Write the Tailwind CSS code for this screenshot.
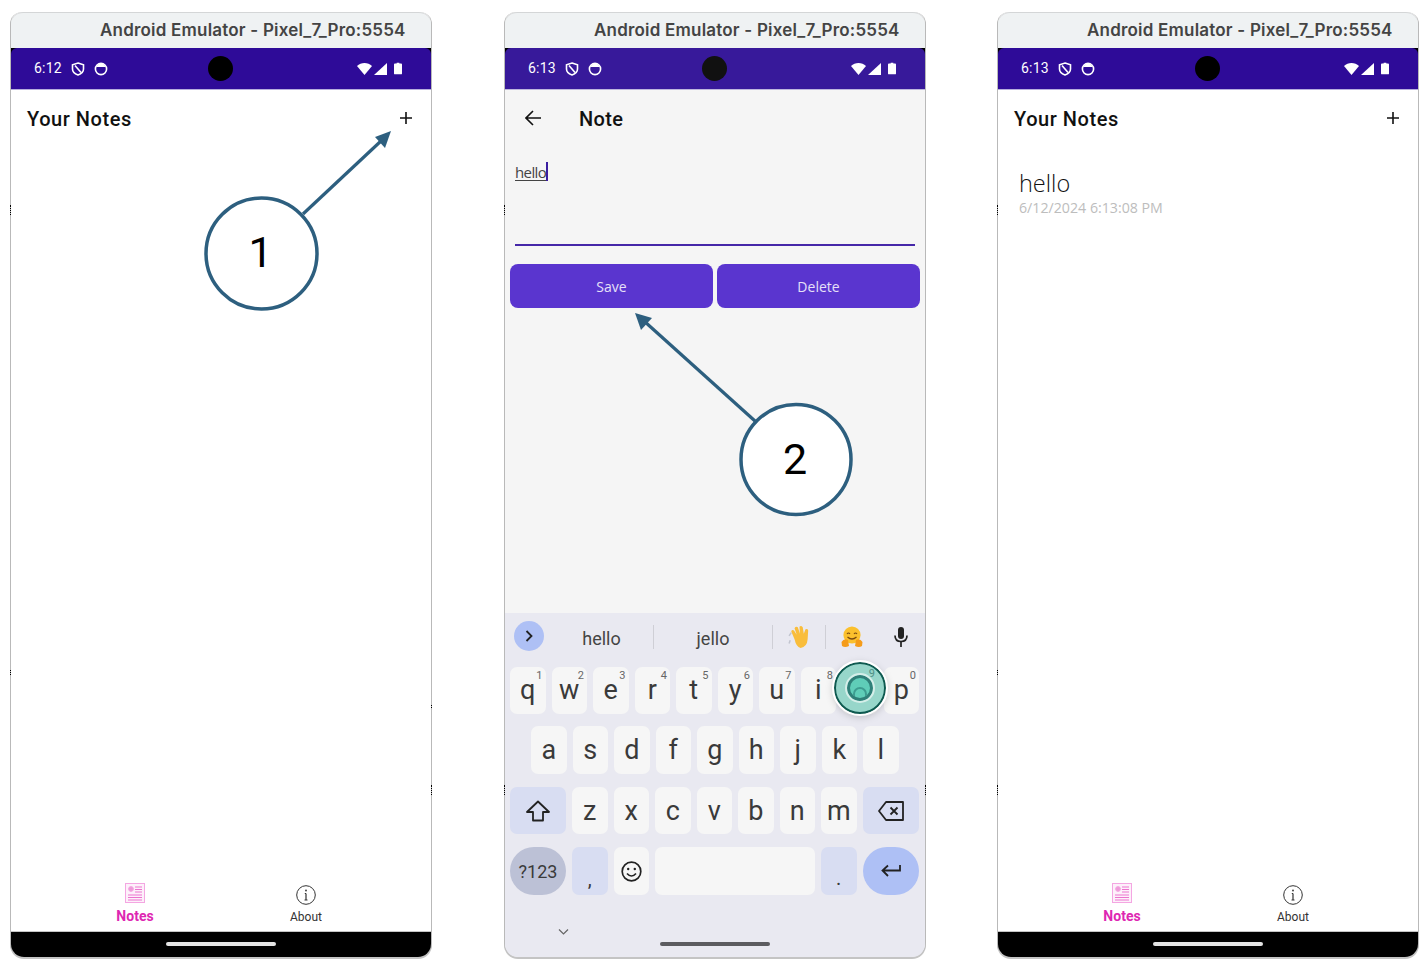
<!DOCTYPE html>
<html lang="en">
<head>
<meta charset="UTF-8">
<meta name="viewport" content="width=device-width, initial-scale=1.0">
<script src="https://cdn.jsdelivr.net/npm/@tailwindcss/browser@4"></script>
<title>Notes app walkthrough</title>
</head>
<body class="bg-white">
<main class="relative w-[1426px] h-[966px] overflow-hidden flex items-start pl-[10px] pt-[12px] font-['Roboto',sans-serif]">

  <!-- phone 1 -->
  <section class="relative w-[422px] h-[945px] flex flex-col rounded-t-[12px] rounded-b-[14px] border-x border-[#b9b9b9] bg-white shadow-[0_2px_0_#c4c4c4]">
    <span class="absolute left-[-1px] top-[193px] h-[10px] border-l border-dotted border-black"></span>
    <span class="absolute left-[-1px] top-[658px] h-[5px] border-l border-dotted border-black"></span>
    <span class="absolute right-[-1px] top-[693px] h-[3px] border-l border-dotted border-black"></span>
    <span class="absolute right-[-1px] top-[773px] h-[10px] border-l border-dotted border-black"></span>
    <header class="h-[36px] pl-[89px] flex items-center rounded-t-[12px] bg-[#eff2f3] border-t border-[#d4d6d7] text-[17px] tracking-[0.2px] font-semibold text-[#444] font-['Inter',sans-serif] whitespace-nowrap">Android Emulator - Pixel_7_Pro:5554</header>
    <div class="bg-black">
      <div class="h-[42px] pl-[23px] pr-[23px] grid grid-cols-3 items-center rounded-t-[6px] bg-[#2e0b98] border-b border-[#b6aedd] text-white">
        <div class="flex items-center gap-[8px]">
          <span class="text-[14px] tracking-[0.2px] w-[29px]">6:12</span>
          <svg class="w-[14px] h-[14px]" viewBox="0 0 14 14" fill="none" stroke="#fff" stroke-width="1.6"><path d="M7 1 L12.500 2.800 V7 C12.500 10 10 12 7 13 C4 12 1.500 10 1.500 7 V2.800 Z"/><path d="M4 3.500 L10 10.500"/></svg>
          <svg class="ml-[1px] w-[14px] h-[14px]" viewBox="0 0 14 14"><circle cx="7" cy="7" r="5.600" fill="none" stroke="#fff" stroke-width="1.6"/><path d="M2.500 5 H11.500 V4 L9 2 H5 L2.500 4 Z" fill="#fff"/></svg>
        </div>
        <div class="justify-self-center w-[25px] h-[25px] rounded-full bg-black"></div>
        <div class="justify-self-end mr-[6px] flex items-center gap-[2px]">
          <svg class="w-[15px] h-[12px]" viewBox="0 0 15 12"><path d="M0 3 C4 -1 11 -1 15 3 L7.500 12 Z" fill="#fff"/></svg>
          <svg class="w-[13px] h-[12px]" viewBox="0 0 13 12"><path d="M13 0 V12 H0 Z" fill="#fff"/></svg>
          <svg class="ml-[5px] w-[8px] h-[13px]" viewBox="0 0 9 13"><path d="M3 0 H6 V1 H8 Q9 1 9 2 V12 Q9 13 8 13 H1 Q0 13 0 12 V2 Q0 1 1 1 H3 Z" fill="#fff"/></svg>
        </div>
      </div>
    </div>
    <div class="h-[58px] pl-[16px] pr-[19px] flex items-center justify-between">
      <h1 class="text-[20px] font-medium tracking-[0.55px] text-[#111]">Your Notes</h1>
      <svg class="w-[12px] h-[12px] mb-[2px]" viewBox="0 0 12 12" stroke="#111" stroke-width="1.6"><path d="M6 0 V12 M0 6 H12"/></svg>
    </div>
    <div class="flex-1"></div>
    <nav class="h-[53px] pt-[4px] flex items-start border-b border-[#c4c4c4]">
      <div class="ml-[94px] w-[60px] flex flex-col items-center">
        <svg class="w-[20px] h-[20px]" viewBox="0 0 20 20" fill="none" stroke="#f4a6e2"><rect x="0.500" y="0.500" width="19" height="19" fill="#fdf0fa"/><circle cx="6" cy="6" r="2.400" fill="#ee9ad9"/><path d="M10 4 H17 M10 6.500 H17 M10 9 H17 M3 12 H17 M3 14.500 H17 M3 17 H17" stroke="#ec74cf"/></svg>
        <span class="mt-[4px] text-[14px] leading-[18px] font-bold text-[#de27b2]">Notes</span>
      </div>
      <div class="ml-[111px] w-[60px] flex flex-col items-center pt-[2px]">
        <svg class="w-[20px] h-[20px]" viewBox="0 0 20 20" fill="none" stroke="#333"><circle cx="10" cy="10" r="9.300"/><path d="M10 8.500 V15 M8.500 15 H11.500 M8.800 8.500 H10" stroke-width="1.2"/><circle cx="10" cy="5.500" r="0.900" fill="#333" stroke="none"/></svg>
        <span class="mt-[4px] text-[12px] leading-[16px] text-[#333]">About</span>
      </div>
    </nav>
    <div class="h-[25px] flex justify-center items-end pb-[11px] rounded-b-[13px] bg-black">
      <div class="w-[110px] h-[4px] rounded-full bg-[#e4e4e4]"></div>
    </div>
  </section>

  <!-- phone 2 -->
  <section class="relative ml-[72px] w-[422px] h-[945px] flex flex-col rounded-t-[12px] rounded-b-[14px] border-x border-[#b9b9b9] bg-[#f5f5f5] shadow-[0_2px_0_#c4c4c4]">
    <span class="absolute left-[-1px] top-[193px] h-[10px] border-l border-dotted border-black"></span>
    <span class="absolute left-[-1px] top-[773px] h-[10px] border-l border-dotted border-black"></span>
    <span class="absolute right-[-1px] top-[773px] h-[10px] border-l border-dotted border-black"></span>
    <header class="h-[36px] pl-[89px] flex items-center rounded-t-[12px] bg-[#eff2f3] border-t border-[#d4d6d7] text-[17px] tracking-[0.2px] font-semibold text-[#444] font-['Inter',sans-serif] whitespace-nowrap">Android Emulator - Pixel_7_Pro:5554</header>
    <div class="bg-black">
      <div class="h-[42px] pl-[23px] pr-[23px] grid grid-cols-3 items-center rounded-t-[6px] bg-[#37199a] border-b border-[#bdb6dd] text-white">
        <div class="flex items-center gap-[8px]">
          <span class="text-[14px] tracking-[0.2px] w-[29px]">6:13</span>
          <svg class="w-[14px] h-[14px]" viewBox="0 0 14 14" fill="none" stroke="#fff" stroke-width="1.6"><path d="M7 1 L12.500 2.800 V7 C12.500 10 10 12 7 13 C4 12 1.500 10 1.500 7 V2.800 Z"/><path d="M4 3.500 L10 10.500"/></svg>
          <svg class="ml-[1px] w-[14px] h-[14px]" viewBox="0 0 14 14"><circle cx="7" cy="7" r="5.600" fill="none" stroke="#fff" stroke-width="1.6"/><path d="M2.500 5 H11.500 V4 L9 2 H5 L2.500 4 Z" fill="#fff"/></svg>
        </div>
        <div class="justify-self-center w-[25px] h-[25px] rounded-full bg-[#111]"></div>
        <div class="justify-self-end mr-[6px] flex items-center gap-[2px]">
          <svg class="w-[15px] h-[12px]" viewBox="0 0 15 12"><path d="M0 3 C4 -1 11 -1 15 3 L7.500 12 Z" fill="#fff"/></svg>
          <svg class="w-[13px] h-[12px]" viewBox="0 0 13 12"><path d="M13 0 V12 H0 Z" fill="#fff"/></svg>
          <svg class="ml-[5px] w-[8px] h-[13px]" viewBox="0 0 9 13"><path d="M3 0 H6 V1 H8 Q9 1 9 2 V12 Q9 13 8 13 H1 Q0 13 0 12 V2 Q0 1 1 1 H3 Z" fill="#fff"/></svg>
        </div>
      </div>
    </div>
    <div class="h-[58px] pl-[20px] flex items-center">
      <svg class="w-[16px] h-[16px] mb-[2px]" viewBox="0 0 16 16" fill="none" stroke="#111" stroke-width="1.6"><path d="M16 8 H1 M8 1 L1 8 L8 15"/></svg>
      <h1 class="ml-[38px] text-[20px] font-medium tracking-[0.35px] text-[#111]">Note</h1>
    </div>
    <div class="mx-[10px] h-[98px] border-b-2 border-[#4527a8]">
      <div class="pt-[14px] flex items-start">
        <span class="text-[15px] leading-[20px] text-[#444] underline underline-offset-2 font-['Open_Sans',sans-serif] tracking-[-0.6px]">hello</span>
        <span class="w-[2px] h-[19px] bg-[#3b1ea0]"></span>
      </div>
    </div>
    <div class="mt-[18px] px-[5px] flex gap-[4px]">
      <button class="w-[203px] h-[44px] rounded-[8px] bg-[#5a35cf] text-[14px] text-[#e6e0f8] font-['Open_Sans',sans-serif]">Save</button>
      <button class="w-[203px] h-[44px] rounded-[8px] bg-[#5a35cf] text-[14px] text-[#e6e0f8] font-['Open_Sans',sans-serif]">Delete</button>
    </div>
    <div class="flex-1"></div>

    <!-- keyboard -->
    <div class="relative h-[344px] flex flex-col rounded-b-[13px] bg-[#e9e9f1] text-[#3a3a3a]">
      <div class="h-[47px] pl-[9px] flex items-center">
        <div class="w-[30px] h-[30px] mt-[-1px] rounded-full bg-[#aec0f5] flex items-center justify-center">
          <svg class="w-[8px] h-[12px]" viewBox="0 0 8 12" fill="none" stroke="#222" stroke-width="1.8"><path d="M1.500 1 L6.500 6 L1.500 11"/></svg>
        </div>
        <div class="w-[110px] pl-[6px] pt-[3px] h-[24px] flex items-center justify-center border-r border-[#cfcfd6] text-[18px] text-[#444]">hello</div>
        <div class="w-[119px] pt-[3px] h-[24px] flex items-center justify-center border-r border-[#cfcfd6] text-[18px] text-[#444]">jello</div>
        <div class="w-[53px] h-[24px] flex items-center justify-center border-r border-[#cfcfd6]">
          <svg class="ml-[2px] w-[24px] h-[24px]" viewBox="0 0 22 22"><path d="M3 7 L1 10 M2 14 L1 17" stroke="#c2c5d0" stroke-width="1.4"/><path d="M6 13 L3 6 Q3.500 4 5.500 5 L8 9 L6 3 Q7 1 9 2 L11 8 L10.500 1.500 Q12 0 13.500 2 L14.500 8 L16 4 Q18 3 18.500 5 L18 13 Q17.500 20 11.500 21 Q7.500 20 6 13 Z" fill="#f9bd3b"/></svg>
        </div>
        <div class="w-[52px] h-[24px] flex items-center justify-center">
          <svg class="w-[22px] h-[22px]" viewBox="0 0 22 22"><circle cx="11" cy="9" r="8.600" fill="#fbc02d"/><path d="M6 8 Q7.500 6 9 8 M13 8 Q14.500 6 16 8" fill="none" stroke="#7a4a10" stroke-width="1.2"/><path d="M6.500 11 Q11 15 15.500 11" fill="none" stroke="#7a4a10" stroke-width="1.2"/><path d="M0.500 16 Q3 12 7 14 L8 20 Q4 22 1 20 Z M21.500 16 Q19 12 15 14 L14 20 Q18 22 21 20 Z" fill="#f59c1a"/></svg>
        </div>
        <div class="w-[46px] h-[24px] flex items-center justify-center">
          <svg class="w-[14px] h-[20px]" viewBox="0 0 14 20"><rect x="4" y="0" width="6" height="12" rx="3" fill="#222"/><path d="M1 8.500 Q1 14.500 7 14.500 Q13 14.500 13 8.500" fill="none" stroke="#222" stroke-width="1.7"/><path d="M7 14.500 V20" stroke="#222" stroke-width="1.7"/></svg>
        </div>
      </div>

      <div class="mt-[7px] pl-[5px] flex gap-[6px] text-[27px]">
        <div class="relative w-[35.5px] h-[47px] rounded-[7px] bg-[#f6f6f6] flex items-center justify-center">q<span class="absolute right-[3px] top-[1px] text-[11px] text-[#666]">1</span></div>
        <div class="relative w-[35.5px] h-[47px] rounded-[7px] bg-[#f6f6f6] flex items-center justify-center">w<span class="absolute right-[3px] top-[1px] text-[11px] text-[#666]">2</span></div>
        <div class="relative w-[35.5px] h-[47px] rounded-[7px] bg-[#f6f6f6] flex items-center justify-center">e<span class="absolute right-[3px] top-[1px] text-[11px] text-[#666]">3</span></div>
        <div class="relative w-[35.5px] h-[47px] rounded-[7px] bg-[#f6f6f6] flex items-center justify-center">r<span class="absolute right-[3px] top-[1px] text-[11px] text-[#666]">4</span></div>
        <div class="relative w-[35.5px] h-[47px] rounded-[7px] bg-[#f6f6f6] flex items-center justify-center">t<span class="absolute right-[3px] top-[1px] text-[11px] text-[#666]">5</span></div>
        <div class="relative w-[35.5px] h-[47px] rounded-[7px] bg-[#f6f6f6] flex items-center justify-center">y<span class="absolute right-[3px] top-[1px] text-[11px] text-[#666]">6</span></div>
        <div class="relative w-[35.5px] h-[47px] rounded-[7px] bg-[#f6f6f6] flex items-center justify-center">u<span class="absolute right-[3px] top-[1px] text-[11px] text-[#666]">7</span></div>
        <div class="relative w-[35.5px] h-[47px] rounded-[7px] bg-[#f6f6f6] flex items-center justify-center">i<span class="absolute right-[3px] top-[1px] text-[11px] text-[#666]">8</span></div>
        <div class="relative w-[35.5px] h-[47px] rounded-[7px] bg-[#f6f6f6] flex items-center justify-center">o<span class="absolute right-[3px] top-[1px] text-[11px] text-[#666]">9</span></div>
        <div class="relative w-[35.5px] h-[47px] rounded-[7px] bg-[#f6f6f6] flex items-center justify-center">p<span class="absolute right-[3px] top-[1px] text-[11px] text-[#666]">0</span></div>
      </div>

      <div class="mt-[12px] pl-[26px] flex gap-[6px] text-[27px]">
        <div class="w-[35.5px] h-[48px] pt-[1px] rounded-[7px] bg-[#f6f6f6] flex items-center justify-center">a</div>
        <div class="w-[35.5px] h-[48px] pt-[1px] rounded-[7px] bg-[#f6f6f6] flex items-center justify-center">s</div>
        <div class="w-[35.5px] h-[48px] pt-[1px] rounded-[7px] bg-[#f6f6f6] flex items-center justify-center">d</div>
        <div class="w-[35.5px] h-[48px] pt-[1px] rounded-[7px] bg-[#f6f6f6] flex items-center justify-center">f</div>
        <div class="w-[35.5px] h-[48px] pt-[1px] rounded-[7px] bg-[#f6f6f6] flex items-center justify-center">g</div>
        <div class="w-[35.5px] h-[48px] pt-[1px] rounded-[7px] bg-[#f6f6f6] flex items-center justify-center">h</div>
        <div class="w-[35.5px] h-[48px] pt-[1px] rounded-[7px] bg-[#f6f6f6] flex items-center justify-center">j</div>
        <div class="w-[35.5px] h-[48px] pt-[1px] rounded-[7px] bg-[#f6f6f6] flex items-center justify-center">k</div>
        <div class="w-[35.5px] h-[48px] pt-[1px] rounded-[7px] bg-[#f6f6f6] flex items-center justify-center">l</div>
      </div>

      <div class="mt-[13px] pl-[5px] flex gap-[6px] text-[27px]">
        <div class="w-[56px] h-[47px] rounded-[7px] bg-[#d8ddf2] flex items-center justify-center">
          <svg class="w-[24px] h-[22px]" viewBox="0 0 24 22" fill="none" stroke="#222" stroke-width="1.8" stroke-linejoin="round"><path d="M12 1.500 L23 12 H17 V20.500 H7 V12 H1 Z"/></svg>
        </div>
        <div class="w-[35.5px] h-[47px] pt-[1px] rounded-[7px] bg-[#f6f6f6] flex items-center justify-center">z</div>
        <div class="w-[35.5px] h-[47px] pt-[1px] rounded-[7px] bg-[#f6f6f6] flex items-center justify-center">x</div>
        <div class="w-[35.5px] h-[47px] pt-[1px] rounded-[7px] bg-[#f6f6f6] flex items-center justify-center">c</div>
        <div class="w-[35.5px] h-[47px] pt-[1px] rounded-[7px] bg-[#f6f6f6] flex items-center justify-center">v</div>
        <div class="w-[35.5px] h-[47px] pt-[1px] rounded-[7px] bg-[#f6f6f6] flex items-center justify-center">b</div>
        <div class="w-[35.5px] h-[47px] pt-[1px] rounded-[7px] bg-[#f6f6f6] flex items-center justify-center">n</div>
        <div class="w-[35.5px] h-[47px] pt-[1px] rounded-[7px] bg-[#f6f6f6] flex items-center justify-center">m</div>
        <div class="w-[56px] h-[47px] rounded-[7px] bg-[#d8ddf2] flex items-center justify-center">
          <svg class="w-[26px] h-[20px]" viewBox="0 0 26 20" fill="none" stroke="#222" stroke-width="1.8" stroke-linejoin="round"><path d="M8 1 H25 V19 H8 L1 10 Z"/><path d="M12.500 6.500 L19.500 13.500 M19.500 6.500 L12.500 13.500"/></svg>
        </div>
      </div>

      <div class="mt-[13px] pl-[5px] flex gap-[6px]">
        <div class="w-[56px] h-[48px] pt-[1px] rounded-full bg-[#bcc1d6] flex items-center justify-center text-[18px]">?123</div>
        <div class="w-[35.5px] h-[48px] rounded-[7px] bg-[#d8ddf2] flex items-end justify-center pb-[6px] text-[20px] leading-[20px]">,</div>
        <div class="w-[35.5px] h-[48px] rounded-[7px] bg-[#f6f6f6] flex items-center justify-center">
          <svg class="w-[21px] h-[21px]" viewBox="0 0 21 21" fill="none" stroke="#222" stroke-width="1.7"><circle cx="10.500" cy="10.500" r="9.300"/><path d="M6 12.500 Q10.500 17.500 15 12.500"/><circle cx="7.200" cy="8" r="1.200" fill="#222" stroke="none"/><circle cx="13.800" cy="8" r="1.200" fill="#222" stroke="none"/></svg>
        </div>
        <div class="w-[160px] h-[48px] rounded-[7px] bg-[#f6f6f6]"></div>
        <div class="w-[35.5px] h-[48px] rounded-[7px] bg-[#d8ddf2] flex items-end justify-center pb-[7px] text-[20px] leading-[20px]">.</div>
        <div class="w-[56px] h-[48px] rounded-full bg-[#aec0f5] flex items-center justify-center">
          <svg class="w-[20px] h-[14px]" viewBox="0 0 20 14" fill="none" stroke="#222" stroke-width="1.8"><path d="M19 1 V6.500 H2 M7 1.500 L1.500 6.500 L7 12"/></svg>
        </div>
      </div>

      <svg class="ml-[53px] mt-[34px] w-[11px] h-[6px]" viewBox="0 0 11 6" fill="none" stroke="#666" stroke-width="1.2"><path d="M1 0.500 L5.500 5 L10 0.500"/></svg>
      <div class="ml-[155px] mt-[7px] w-[110px] h-[4px] rounded-full bg-[#5c5c60]"></div>

      <!-- touch marker over the o key -->
      <div class="absolute left-[329px] top-[49px] w-[52px] h-[52px] rounded-full border-2 border-[#0e5a50] bg-[#97d6ca] outline-2 outline-white shadow-[0_2px_8px_rgba(0,0,0,0.25)] flex items-center justify-center">
        <div class="w-[26px] h-[26px] rounded-full border-[3px] border-[#2f7f78] bg-[#5fcdb8] outline-2 outline-[#d5eee9] flex items-end justify-center overflow-hidden">
          <div class="w-[14px] h-[16px] mb-[-5px] rounded-full border-2 border-[#3d9c90]"></div>
        </div>
        <span class="absolute right-[9px] top-[2px] text-[11px] text-[#4f8f86]">9</span>
      </div>
    </div>
  </section>

  <!-- phone 3 -->
  <section class="relative ml-[71px] w-[422px] h-[945px] flex flex-col rounded-t-[12px] rounded-b-[14px] border-x border-[#b9b9b9] bg-white shadow-[0_2px_0_#c4c4c4]">
    <span class="absolute left-[-1px] top-[193px] h-[10px] border-l border-dotted border-black"></span>
    <span class="absolute left-[-1px] top-[658px] h-[5px] border-l border-dotted border-black"></span>
    <span class="absolute left-[-1px] top-[773px] h-[10px] border-l border-dotted border-black"></span>
    <header class="h-[36px] pl-[89px] flex items-center rounded-t-[12px] bg-[#eff2f3] border-t border-[#d4d6d7] text-[17px] tracking-[0.2px] font-semibold text-[#444] font-['Inter',sans-serif] whitespace-nowrap">Android Emulator - Pixel_7_Pro:5554</header>
    <div class="bg-black">
      <div class="h-[42px] pl-[23px] pr-[23px] grid grid-cols-3 items-center rounded-t-[6px] bg-[#2e0b98] border-b border-[#b6aedd] text-white">
        <div class="flex items-center gap-[8px]">
          <span class="text-[14px] tracking-[0.2px] w-[29px]">6:13</span>
          <svg class="w-[14px] h-[14px]" viewBox="0 0 14 14" fill="none" stroke="#fff" stroke-width="1.6"><path d="M7 1 L12.500 2.800 V7 C12.500 10 10 12 7 13 C4 12 1.500 10 1.500 7 V2.800 Z"/><path d="M4 3.500 L10 10.500"/></svg>
          <svg class="ml-[1px] w-[14px] h-[14px]" viewBox="0 0 14 14"><circle cx="7" cy="7" r="5.600" fill="none" stroke="#fff" stroke-width="1.6"/><path d="M2.500 5 H11.500 V4 L9 2 H5 L2.500 4 Z" fill="#fff"/></svg>
        </div>
        <div class="justify-self-center w-[25px] h-[25px] rounded-full bg-black"></div>
        <div class="justify-self-end mr-[6px] flex items-center gap-[2px]">
          <svg class="w-[15px] h-[12px]" viewBox="0 0 15 12"><path d="M0 3 C4 -1 11 -1 15 3 L7.500 12 Z" fill="#fff"/></svg>
          <svg class="w-[13px] h-[12px]" viewBox="0 0 13 12"><path d="M13 0 V12 H0 Z" fill="#fff"/></svg>
          <svg class="ml-[5px] w-[8px] h-[13px]" viewBox="0 0 9 13"><path d="M3 0 H6 V1 H8 Q9 1 9 2 V12 Q9 13 8 13 H1 Q0 13 0 12 V2 Q0 1 1 1 H3 Z" fill="#fff"/></svg>
        </div>
      </div>
    </div>
    <div class="h-[58px] pl-[16px] pr-[19px] flex items-center justify-between">
      <h1 class="text-[20px] font-medium tracking-[0.55px] text-[#111]">Your Notes</h1>
      <svg class="w-[12px] h-[12px] mb-[2px]" viewBox="0 0 12 12" stroke="#111" stroke-width="1.6"><path d="M6 0 V12 M0 6 H12"/></svg>
    </div>
    <div class="flex-1 pl-[21px] pt-[19px] font-['Open_Sans',sans-serif]">
      <p class="text-[23.5px] leading-[32px] font-light text-[#111]">hello</p>
      <p class="text-[14.2px] leading-[18px] text-[#bdbdbd]">6/12/2024 6:13:08 PM</p>
    </div>
    <nav class="h-[53px] pt-[4px] flex items-start border-b border-[#c4c4c4]">
      <div class="ml-[94px] w-[60px] flex flex-col items-center">
        <svg class="w-[20px] h-[20px]" viewBox="0 0 20 20" fill="none" stroke="#f4a6e2"><rect x="0.500" y="0.500" width="19" height="19" fill="#fdf0fa"/><circle cx="6" cy="6" r="2.400" fill="#ee9ad9"/><path d="M10 4 H17 M10 6.500 H17 M10 9 H17 M3 12 H17 M3 14.500 H17 M3 17 H17" stroke="#ec74cf"/></svg>
        <span class="mt-[4px] text-[14px] leading-[18px] font-bold text-[#de27b2]">Notes</span>
      </div>
      <div class="ml-[111px] w-[60px] flex flex-col items-center pt-[2px]">
        <svg class="w-[20px] h-[20px]" viewBox="0 0 20 20" fill="none" stroke="#333"><circle cx="10" cy="10" r="9.300"/><path d="M10 8.500 V15 M8.500 15 H11.500 M8.800 8.500 H10" stroke-width="1.2"/><circle cx="10" cy="5.500" r="0.900" fill="#333" stroke="none"/></svg>
        <span class="mt-[4px] text-[12px] leading-[16px] text-[#333]">About</span>
      </div>
    </nav>
    <div class="h-[25px] flex justify-center items-end pb-[11px] rounded-b-[13px] bg-black">
      <div class="w-[110px] h-[4px] rounded-full bg-[#e4e4e4]"></div>
    </div>
  </section>

  <!-- numbered callouts drawn over the screens -->
  <svg class="absolute left-0 top-0 w-[1426px] h-[966px] pointer-events-none" viewBox="0 0 1426 966" fill="none">
    <path d="M303 214 L381 141" stroke="#2d5f7f" stroke-width="3.2"/>
    <path d="M391 131 L375 137 L385 148 Z" fill="#2d5f7f"/>
    <circle cx="261.500" cy="253.500" r="55.500" fill="#fff" stroke="#2d5f7f" stroke-width="3.5"/>
    <text x="260.500" y="267" text-anchor="middle" font-family="Roboto, sans-serif" font-size="43" fill="#000">1</text>
    <path d="M755 421 L644 321" stroke="#2d5f7f" stroke-width="3.2"/>
    <path d="M635 313 L641 330 L652 318 Z" fill="#2d5f7f"/>
    <circle cx="796" cy="459.500" r="55" fill="#fff" stroke="#2d5f7f" stroke-width="3.5"/>
    <text x="795" y="474" text-anchor="middle" font-family="Roboto, sans-serif" font-size="43" fill="#000">2</text>
  </svg>
</main>
</body>
</html>
